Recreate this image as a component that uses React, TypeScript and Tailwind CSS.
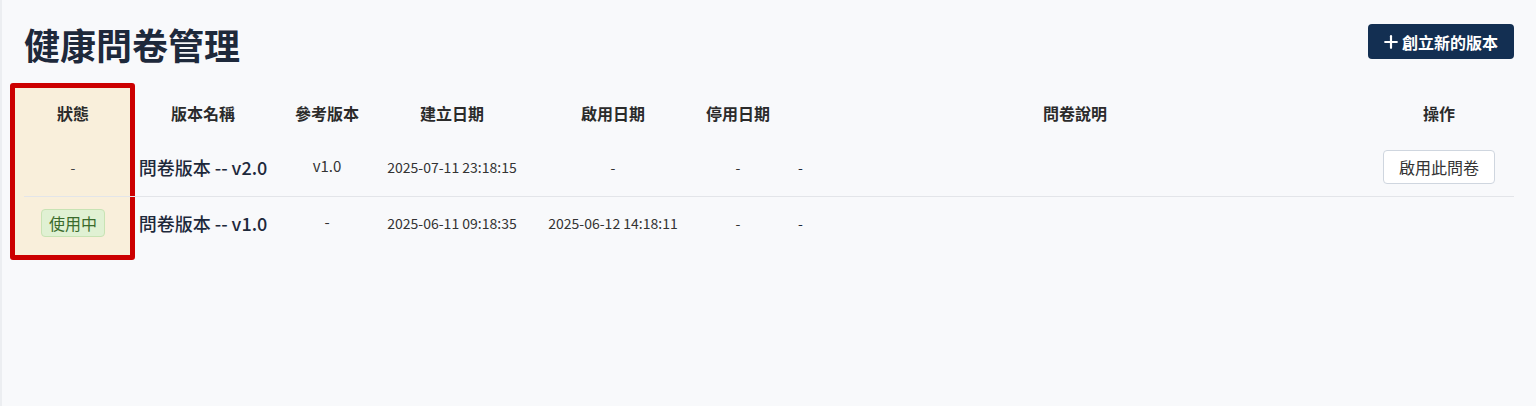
import { Plus } from 'lucide-react';

type Row = {
    status: 'active' | 'none';
    name: string;
    ref: string;
    created: string;
    activated: string;
    deactivated: string;
    description: string;
    canActivate: boolean;
};

const rows: Row[] = [
    {
        status: 'none',
        name: '問卷版本 -- v2.0',
        ref: 'v1.0',
        created: '2025-07-11 23:18:15',
        activated: '-',
        deactivated: '-',
        description: '-',
        canActivate: true,
    },
    {
        status: 'active',
        name: '問卷版本 -- v1.0',
        ref: '-',
        created: '2025-06-11 09:18:35',
        activated: '2025-06-12 14:18:11',
        deactivated: '-',
        description: '-',
        canActivate: false,
    },
];

const cols = 'grid grid-cols-[98px_162px_86px_164px_158px_92px_582px_146px]';

const App = () => {
    return (
        <div
            className="min-h-[406px] bg-[#f8f9fb] border-l-2 border-[#eceef1] px-[22px] pt-6 text-[#1f2937]"
            style={{ fontFamily: '"Noto Sans CJK TC", "Noto Sans", sans-serif' }}
        >
            {/* Title bar */}
            <div className="flex items-start justify-between">
                <h1 className="text-4xl leading-10 font-bold text-[#1e293b]">健康問卷管理</h1>
                <button className="flex items-center gap-px h-[35px] pl-[13px] pr-4 rounded bg-[#132f52] text-white text-base font-bold">
                    <Plus className="w-5 h-5" strokeWidth={2.6} />
                    創立新的版本
                </button>
            </div>

            {/* Table */}
            <div className="relative mt-6">
                {/* status column highlight */}
                <div className="absolute -left-[14px] -top-[5px] w-[125px] h-[177px] bg-[#f9efdb] border-[5px] border-[#cc0000] rounded-[3px]" />

                <div className="relative">
                    <div className={`${cols} h-[50px] items-center text-base font-bold text-[#2b2b2b] text-center`}>
                        <div>狀態</div>
                        <div>版本名稱</div>
                        <div>參考版本</div>
                        <div>建立日期</div>
                        <div>啟用日期</div>
                        <div>停用日期</div>
                        <div>問卷說明</div>
                        <div>操作</div>
                    </div>

                    {rows.map((r, i) => (
                        <div
                            key={r.name}
                            className={`${cols} items-center text-center ${i === 0 ? 'h-[58px] pb-px' : 'h-[56px] pb-1 border-t border-[#e3e5e9]'}`}
                        >
                            <div className="flex justify-center text-sm text-[#444]">
                                {r.status === 'active' ? (
                                    <span className="h-[28px] px-[7px] flex items-center rounded border border-[#c8e3b4] bg-[#e0f1d3] text-base text-[#3a6b2c]">
                                        使用中
                                    </span>
                                ) : (
                                    '-'
                                )}
                            </div>
                            <div className="text-lg font-medium text-[#1e293b]">{r.name}</div>
                            <div className="text-[15px] text-[#333]">{r.ref}</div>
                            <div className="text-sm text-[#333]">{r.created}</div>
                            <div className="text-sm text-[#333]">{r.activated}</div>
                            <div className="text-sm text-[#333]">{r.deactivated}</div>
                            <div className="text-left pl-[14px] text-sm text-[#1e293b]">{r.description}</div>
                            <div className="flex justify-center">
                                {r.canActivate && (
                                    <button className="h-[34px] w-[112px] rounded border border-[#cfd6df] bg-white text-base text-[#333]">
                                        啟用此問卷
                                    </button>
                                )}
                            </div>
                        </div>
                    ))}
                </div>
            </div>
        </div>
    );
};

export default App;
